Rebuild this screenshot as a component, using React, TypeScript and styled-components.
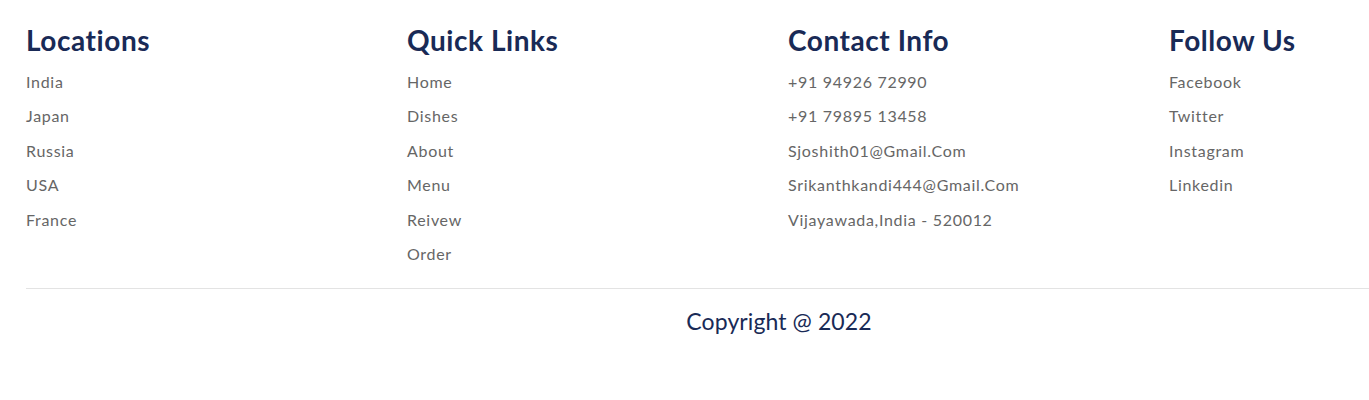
import React from 'react';
import styled, { createGlobalStyle } from 'styled-components';

const GlobalStyle = createGlobalStyle`
  * {
    box-sizing: border-box;
  }

  body {
    margin: 0;
    background: #fff;
    font-family: 'Lato', 'Noto Sans', sans-serif;
  }
`;

const Footer = styled.footer`
  width: 1532px;
  padding: 22px 0 40px 26px;
`;

const Columns = styled.div`
  display: grid;
  grid-template-columns: repeat(4, 1fr);
  column-gap: 18px;
  padding-bottom: 17px;
  border-bottom: 1px solid #e3e3e3;
`;

const Column = styled.div`
  display: flex;
  flex-direction: column;
  align-items: flex-start;
`;

const ColumnTitle = styled.h3`
  margin: 0 0 7px;
  color: #192a56;
  font-size: 28px;
  font-weight: 700;
  line-height: 36px;
  letter-spacing: 0.55px;
`;

const ColumnLink = styled.a`
  display: block;
  padding: 5px 0;
  color: #666;
  font-size: 16px;
  line-height: 24.4px;
  letter-spacing: 0.7px;
  text-decoration: none;
`;

const Credit = styled.p`
  margin: 0;
  padding-top: 17px;
  color: #192a56;
  font-size: 23px;
  line-height: 30px;
  letter-spacing: 0.1px;
  text-align: center;
`;

const sections = [
  { title: 'Locations', links: ['India', 'Japan', 'Russia', 'USA', 'France'] },
  { title: 'Quick Links', links: ['Home', 'Dishes', 'About', 'Menu', 'Reivew', 'Order'] },
  {
    title: 'Contact Info',
    links: [
      '+91 94926 72990',
      '+91 79895 13458',
      'Sjoshith01@Gmail.Com',
      'Srikanthkandi444@Gmail.Com',
      'Vijayawada,India - 520012',
    ],
  },
  { title: 'Follow Us', links: ['Facebook', 'Twitter', 'Instagram', 'Linkedin'] },
];

const App: React.FC = () => {
  return (
    <>
      <GlobalStyle />
      <Footer>
        <Columns>
          {sections.map((section) => (
            <Column key={section.title}>
              <ColumnTitle>{section.title}</ColumnTitle>
              {section.links.map((link) => (
                <ColumnLink key={link} href="#">
                  {link}
                </ColumnLink>
              ))}
            </Column>
          ))}
        </Columns>
        <Credit>Copyright @ 2022</Credit>
      </Footer>
    </>
  );
};

export default App;
